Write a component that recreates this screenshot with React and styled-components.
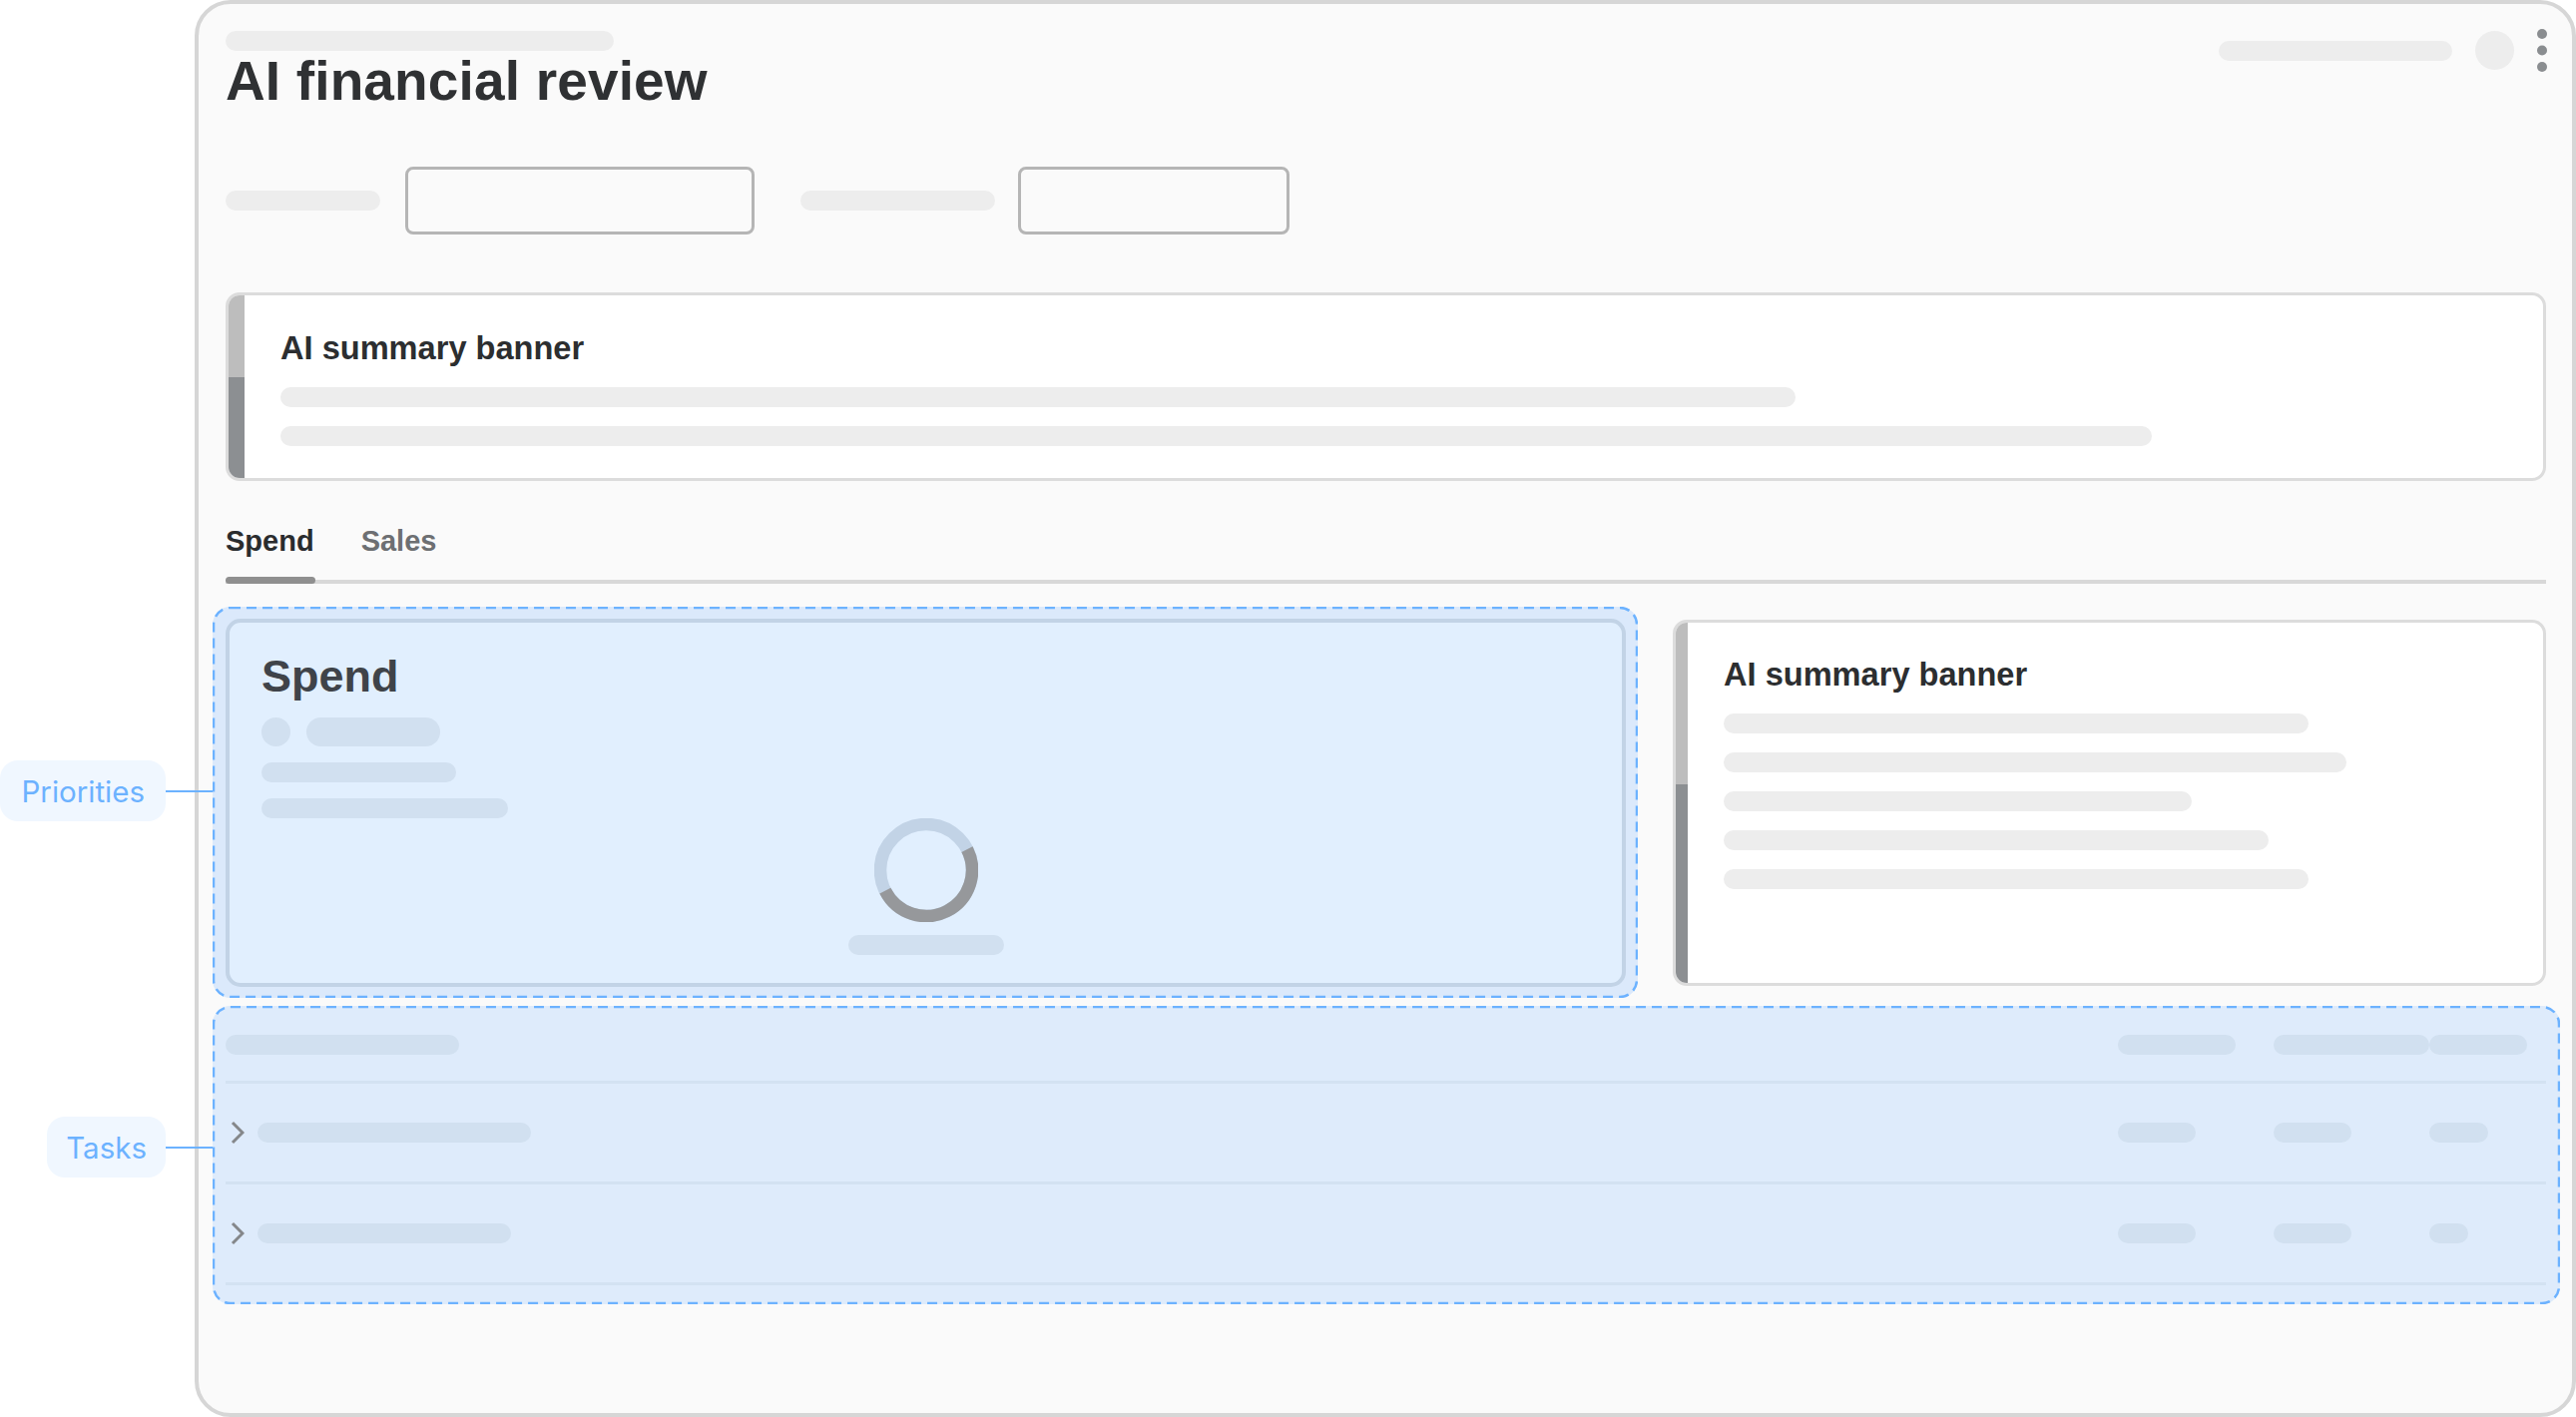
import styled, { createGlobalStyle } from 'styled-components'

const GlobalStyle = createGlobalStyle`
  html, body {
    margin: 0;
    padding: 0;
    background: #ffffff;
  }
  * {
    box-sizing: border-box;
  }
`

const Page = styled.div`
  width: 2581px;
  height: 1420px;
  overflow: hidden;
  background: #ffffff;
  padding-left: 195px;
  font-family: "Liberation Sans", Arial, sans-serif;
`

const Frame = styled.div`
  width: 2386px;
  height: 1420px;
  background: #fafafa;
  border: 4px solid #d6d6d6;
  border-radius: 36px;
  padding: 27px 26px 0 27px;
`

const Bar = styled.div`
  width: ${(p) => p.$w}px;
  height: 20px;
  flex: none;
  border-radius: 10px;
  background: ${(p) => (p.$blue ? '#d1e0f0' : '#ededed')};
`

const Header = styled.div`
  display: flex;
  justify-content: space-between;
  align-items: flex-start;
`

const Title = styled.h1`
  margin: 0;
  font-size: 55px;
  line-height: 60px;
  letter-spacing: 0.15px;
  font-weight: 700;
  color: #2f3133;
`

const HeaderRight = styled.div`
  display: flex;
  align-items: center;
  gap: 23px;
  margin: -2px -1px 0 0;
`

const Avatar = styled.div`
  width: 39px;
  height: 39px;
  border-radius: 50%;
  background: #ededed;
`

const Filters = styled.div`
  display: flex;
  align-items: center;
  margin-top: 56px;
`

const FilterInput = styled.div`
  width: ${(p) => p.$w}px;
  height: 68px;
  margin: 0 46px 0 ${(p) => p.$gap}px;
  border: 3px solid #b5b5b5;
  border-radius: 8px;
`

const Banner = styled.div`
  display: flex;
  overflow: hidden;
  background: #ffffff;
  border: 3px solid #dcdcdc;
  border-radius: 14px;
  height: ${(p) => p.$h}px;
`

const TopBanner = styled(Banner)`
  margin-top: 58px;
`

const Stripe = styled.div`
  width: ${(p) => p.$w}px;
  flex: none;
  background: linear-gradient(#bdbdbd 0 45%, #8c8f92 45% 100%);
`

const BannerBody = styled.div`
  display: flex;
  flex-direction: column;
  padding: ${(p) => p.$top}px 0 0 36px;
`

const BannerTitle = styled.h3`
  margin: 0 0 21px;
  font-size: 32.6px;
  line-height: 36px;
  font-weight: 700;
  color: #2c2e30;
`

const Lines = styled.div`
  display: flex;
  flex-direction: column;
  gap: ${(p) => p.$gap}px;
`

const TabList = styled.div`
  display: flex;
  gap: 47px;
  margin-top: 43px;
  border-bottom: 4px solid #d8d8d8;
`

const Tab = styled.div`
  position: relative;
  padding-bottom: 22px;
  font-size: 29px;
  line-height: 34px;
  font-weight: 700;
  color: ${(p) => (p.$active ? '#2a2c2e' : '#6d6f72')};

  ${(p) =>
    p.$active &&
    `&::after {
      content: '';
      position: absolute;
      left: 0;
      right: -1px;
      bottom: -4px;
      height: 7px;
      border-radius: 4px;
      background: #8f8f8f;
    }`}
`

const MainRow = styled.div`
  display: flex;
  gap: 35px;
  margin: 23px 0 0 -13px;
`

const Region = styled.div`
  position: relative;
  border-radius: 18px;
  background: ${(p) => p.$bg};
`

const PriorityRegion = styled(Region)`
  width: 1428px;
  height: 392px;
  padding: 12px 12px 11px 13px;
`

const TaskRegion = styled(Region)`
  width: 2352px;
  margin: 8px 0 0 -13px;
  padding: 0 14px 19px 13px;
`

const DashedBox = styled.svg`
  position: absolute;
  inset: 0;
  width: 100%;
  height: 100%;
  pointer-events: none;
`

const DashedRect = styled.rect`
  x: 1px;
  y: 1px;
  width: calc(100% - 2px);
  height: calc(100% - 2px);
  rx: 17px;
  fill: none;
  stroke: #6cb2ff;
  stroke-width: 2.5;
  stroke-dasharray: 10 6;
`

const Callout = styled.div`
  position: absolute;
  right: 100%;
  top: ${(p) => p.$top}px;
  display: flex;
  align-items: center;
`

const CalloutLabel = styled.div`
  height: 61px;
  padding: 0 ${(p) => p.$pad}px;
  display: flex;
  align-items: center;
  border-radius: 18px;
  background: #f0f7ff;
  color: #6cb2ff;
  font-family: Inter, "Liberation Sans", sans-serif;
  font-size: 29.5px;
  font-weight: 400;
  white-space: nowrap;
`

const CalloutLine = styled.div`
  width: 47px;
  height: 2px;
  background: #6cb2ff;
`

const SpendCard = styled.div`
  height: 369px;
  padding: 29px 32px 0;
  background: #e1effe;
  border: 4px solid #c2d3e6;
  border-radius: 15px;
`

const SpendTitle = styled.h2`
  margin: 0 0 16px;
  font-size: 45px;
  line-height: 50px;
  font-weight: 700;
  color: #3f4349;
`

const LegendRow = styled.div`
  display: flex;
  gap: 16px;
  margin-bottom: 16px;
`

const LegendDot = styled.div`
  width: 29px;
  height: 29px;
  border-radius: 50%;
  background: #d1e0f0;
`

const LegendPill = styled.div`
  width: 134px;
  height: 29px;
  border-radius: 15px;
  background: #d1e0f0;
`

const ChartBlock = styled.div`
  display: flex;
  flex-direction: column;
  align-items: center;
  gap: 13px;
`

const SideCard = styled(Banner)`
  width: 875px;
  margin-top: 13px;
`

const TableRow = styled.div`
  display: grid;
  grid-template-columns: 1fr 156px 156px 117px;
  height: 101px;
  align-items: center;
  border-bottom: 3px solid #d3e2f2;
`

const TableHead = styled(TableRow)`
  height: 78px;
  align-items: start;
  padding-top: 29px;
`

const RowName = styled.div`
  display: flex;
  align-items: center;
  gap: 13px;
  padding-left: 5px;
`

const DONUT_R = 46
const DONUT_C = 2 * Math.PI * DONUT_R

const Donut = () => (
  <svg width="104" height="104" viewBox="0 0 104 104">
    <circle cx="52" cy="52" r={DONUT_R} fill="none" stroke="#c2d3e6" strokeWidth="12.5" />
    <circle
      cx="52"
      cy="52"
      r={DONUT_R}
      fill="none"
      stroke="#96989b"
      strokeWidth="12.5"
      strokeDasharray={`${DONUT_C / 2} ${DONUT_C / 2}`}
      transform="rotate(-27 52 52)"
    />
  </svg>
)

const Chevron = () => (
  <svg width="14" height="24" viewBox="0 0 14 24">
    <polyline points="2,2 12,12 2,22" fill="none" stroke="#85878a" strokeWidth="3" />
  </svg>
)

const MoreDots = () => (
  <svg width="10" height="43" viewBox="0 0 10 43">
    <circle cx="5" cy="5" r="5" fill="#8a8d90" />
    <circle cx="5" cy="21.5" r="5" fill="#8a8d90" />
    <circle cx="5" cy="38" r="5" fill="#8a8d90" />
  </svg>
)

const Dashes = () => (
  <DashedBox>
    <DashedRect />
  </DashedBox>
)

const sideLines = [586, 624, 469, 546, 586]

const tasks = [
  { name: 274, cols: [78, 78, 59] },
  { name: 254, cols: [78, 78, 39] },
]

const App = () => {
  return (
    <Page>
      <GlobalStyle />
      <Frame>
        <Header>
          <div>
            <Bar $w={389} />
            <Title>AI financial review</Title>
          </div>
          <HeaderRight>
            <Bar $w={234} />
            <Avatar />
            <MoreDots />
          </HeaderRight>
        </Header>

        <Filters>
          <Bar $w={155} />
          <FilterInput $w={350} $gap={25} />
          <Bar $w={195} />
          <FilterInput $w={272} $gap={23} />
        </Filters>

        <TopBanner $h={189}>
          <Stripe $w={16} />
          <BannerBody $top={35}>
            <BannerTitle>AI summary banner</BannerTitle>
            <Lines $gap={19}>
              <Bar $w={1518} />
              <Bar $w={1875} />
            </Lines>
          </BannerBody>
        </TopBanner>

        <TabList>
          <Tab $active>Spend</Tab>
          <Tab>Sales</Tab>
        </TabList>

        <MainRow>
          <PriorityRegion $bg="#dbe9fb">
            <SpendCard>
              <SpendTitle>Spend</SpendTitle>
              <LegendRow>
                <LegendDot />
                <LegendPill />
              </LegendRow>
              <Lines $gap={16}>
                <Bar $blue $w={195} />
                <Bar $blue $w={247} />
              </Lines>
              <ChartBlock>
                <Donut />
                <Bar $blue $w={156} />
              </ChartBlock>
            </SpendCard>
            <Dashes />
            <Callout $top={154}>
              <CalloutLabel $pad={21}>Priorities</CalloutLabel>
              <CalloutLine />
            </Callout>
          </PriorityRegion>

          <SideCard $h={367}>
            <Stripe $w={12} />
            <BannerBody $top={34}>
              <BannerTitle>AI summary banner</BannerTitle>
              <Lines $gap={19}>
                {sideLines.map((w, i) => (
                  <Bar key={i} $w={w} />
                ))}
              </Lines>
            </BannerBody>
          </SideCard>
        </MainRow>

        <TaskRegion $bg="#deebfb">
          <TableHead>
            <Bar $blue $w={234} />
            <Bar $blue $w={118} />
            <Bar $blue $w={156} />
            <Bar $blue $w={98} />
          </TableHead>
          {tasks.map((task, i) => (
            <TableRow key={i}>
              <RowName>
                <Chevron />
                <Bar $blue $w={task.name} />
              </RowName>
              {task.cols.map((w, j) => (
                <Bar key={j} $blue $w={w} />
              ))}
            </TableRow>
          ))}
          <Dashes />
          <Callout $top={111}>
            <CalloutLabel $pad={19}>Tasks</CalloutLabel>
            <CalloutLine />
          </Callout>
        </TaskRegion>
      </Frame>
    </Page>
  )
}

export default App
